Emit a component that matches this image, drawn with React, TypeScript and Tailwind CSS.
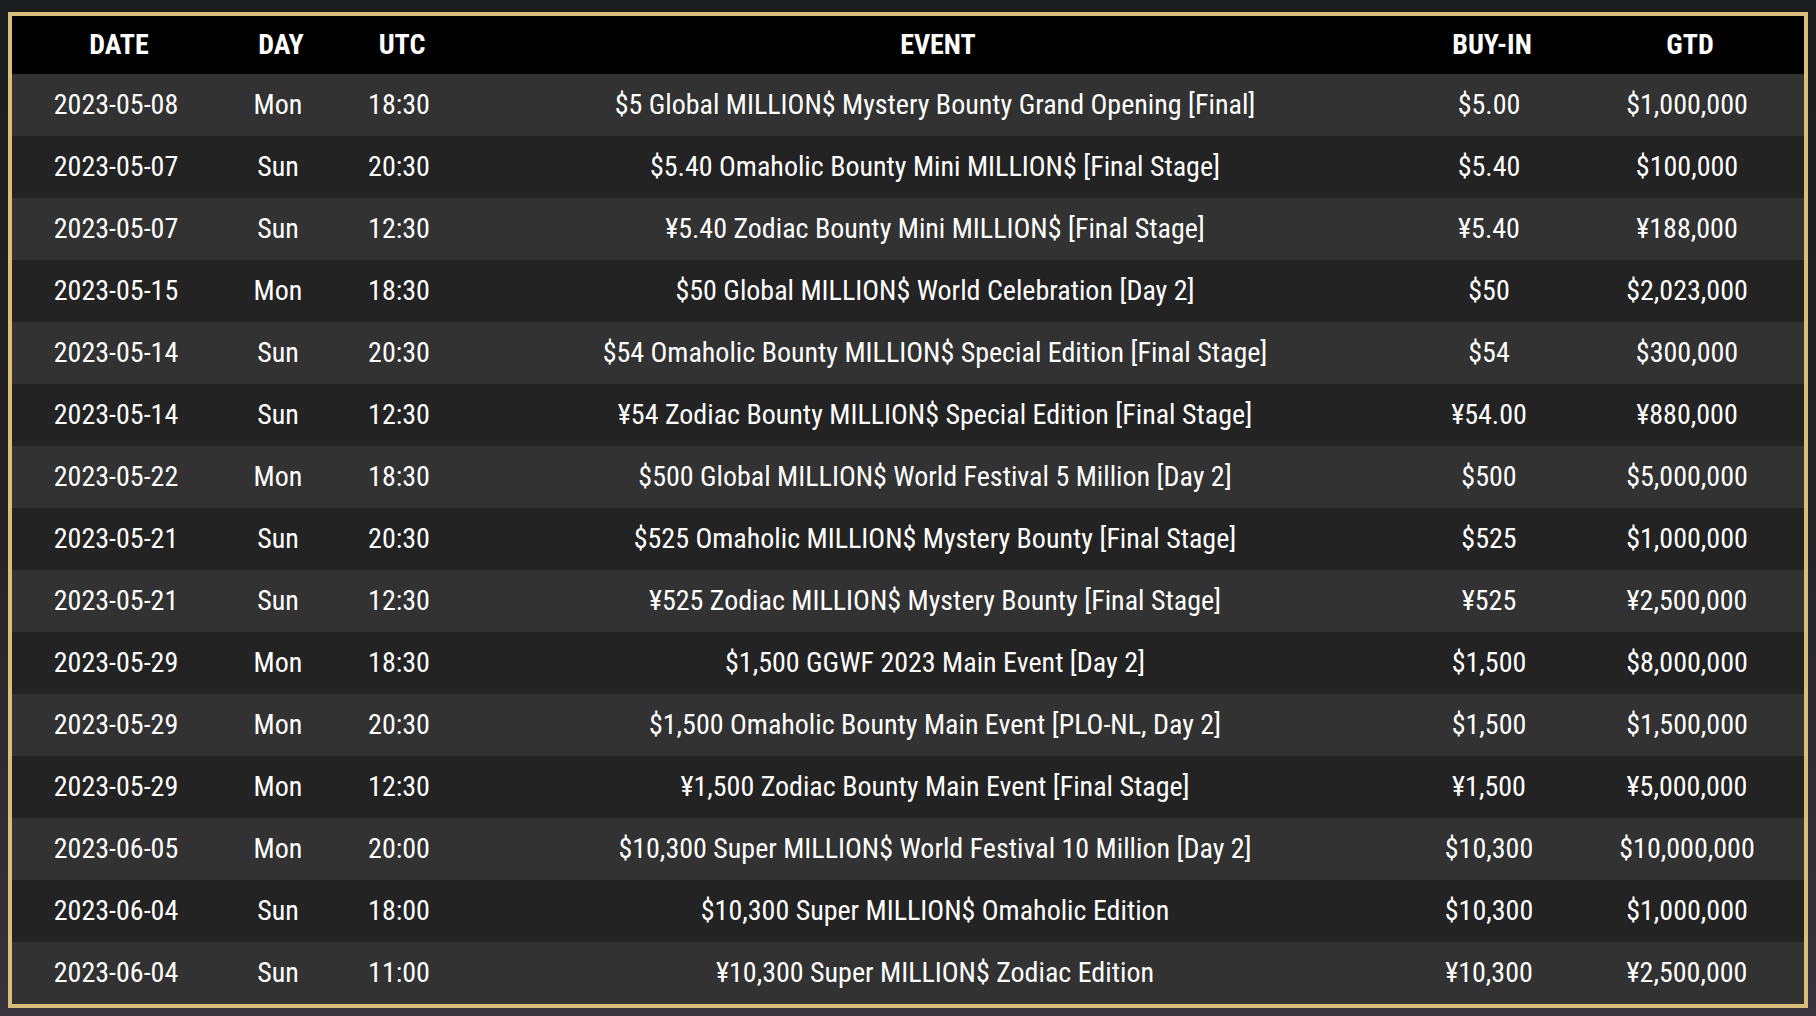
const rows = [
  ["2023-05-08", "Mon", "18:30", "$5 Global MILLION$ Mystery Bounty Grand Opening [Final]", "$5.00", "$1,000,000"],
  ["2023-05-07", "Sun", "20:30", "$5.40 Omaholic Bounty Mini MILLION$ [Final Stage]", "$5.40", "$100,000"],
  ["2023-05-07", "Sun", "12:30", "¥5.40 Zodiac Bounty Mini MILLION$ [Final Stage]", "¥5.40", "¥188,000"],
  ["2023-05-15", "Mon", "18:30", "$50 Global MILLION$ World Celebration [Day 2]", "$50", "$2,023,000"],
  ["2023-05-14", "Sun", "20:30", "$54 Omaholic Bounty MILLION$ Special Edition [Final Stage]", "$54", "$300,000"],
  ["2023-05-14", "Sun", "12:30", "¥54 Zodiac Bounty MILLION$ Special Edition [Final Stage]", "¥54.00", "¥880,000"],
  ["2023-05-22", "Mon", "18:30", "$500 Global MILLION$ World Festival 5 Million [Day 2]", "$500", "$5,000,000"],
  ["2023-05-21", "Sun", "20:30", "$525 Omaholic MILLION$ Mystery Bounty [Final Stage]", "$525", "$1,000,000"],
  ["2023-05-21", "Sun", "12:30", "¥525 Zodiac MILLION$ Mystery Bounty [Final Stage]", "¥525", "¥2,500,000"],
  ["2023-05-29", "Mon", "18:30", "$1,500 GGWF 2023 Main Event [Day 2]", "$1,500", "$8,000,000"],
  ["2023-05-29", "Mon", "20:30", "$1,500 Omaholic Bounty Main Event [PLO-NL, Day 2]", "$1,500", "$1,500,000"],
  ["2023-05-29", "Mon", "12:30", "¥1,500 Zodiac Bounty Main Event [Final Stage]", "¥1,500", "¥5,000,000"],
  ["2023-06-05", "Mon", "20:00", "$10,300 Super MILLION$ World Festival 10 Million [Day 2]", "$10,300", "$10,000,000"],
  ["2023-06-04", "Sun", "18:00", "$10,300 Super MILLION$ Omaholic Edition", "$10,300", "$1,000,000"],
  ["2023-06-04", "Sun", "11:00", "¥10,300 Super MILLION$ Zodiac Edition", "¥10,300", "¥2,500,000"],
];

const headers = ["DATE", "DAY", "UTC", "EVENT", "BUY-IN", "GTD"];
const widths = ["w-[208px]", "w-[116px]", "w-[126px]", "w-[946px]", "w-[162px]", "w-[234px]"];

export default function App() {
  return (
    <div className="min-h-[1016px] w-full bg-gradient-to-b from-[#1b1c1e] via-[#232326] to-[#38333c] pt-3 pl-2 pr-2 font-['Roboto','Liberation_Sans',sans-serif] [font-stretch:75%]">
      <div className="w-[1800px] border-4 border-[#dbbd7b] bg-black">
        <table className="w-full table-fixed border-collapse text-white">
          <thead>
            <tr className="h-[58px] bg-black">
              {headers.map((h, i) => (
                <th key={h} className={`${widths[i]} pl-[6px] text-center text-[28px] font-bold`}>
                  {h}
                </th>
              ))}
            </tr>
          </thead>
          <tbody>
            {rows.map((r, idx) => (
              <tr key={idx} className={idx % 2 === 0 ? "h-[62px] bg-[#323232]" : "h-[62px] bg-[#242323]"}>
                {r.map((c, i) => (
                  <td key={i} className="text-center text-[28px] font-normal leading-none">
                    {c}
                  </td>
                ))}
              </tr>
            ))}
          </tbody>
        </table>
      </div>
    </div>
  );
}
